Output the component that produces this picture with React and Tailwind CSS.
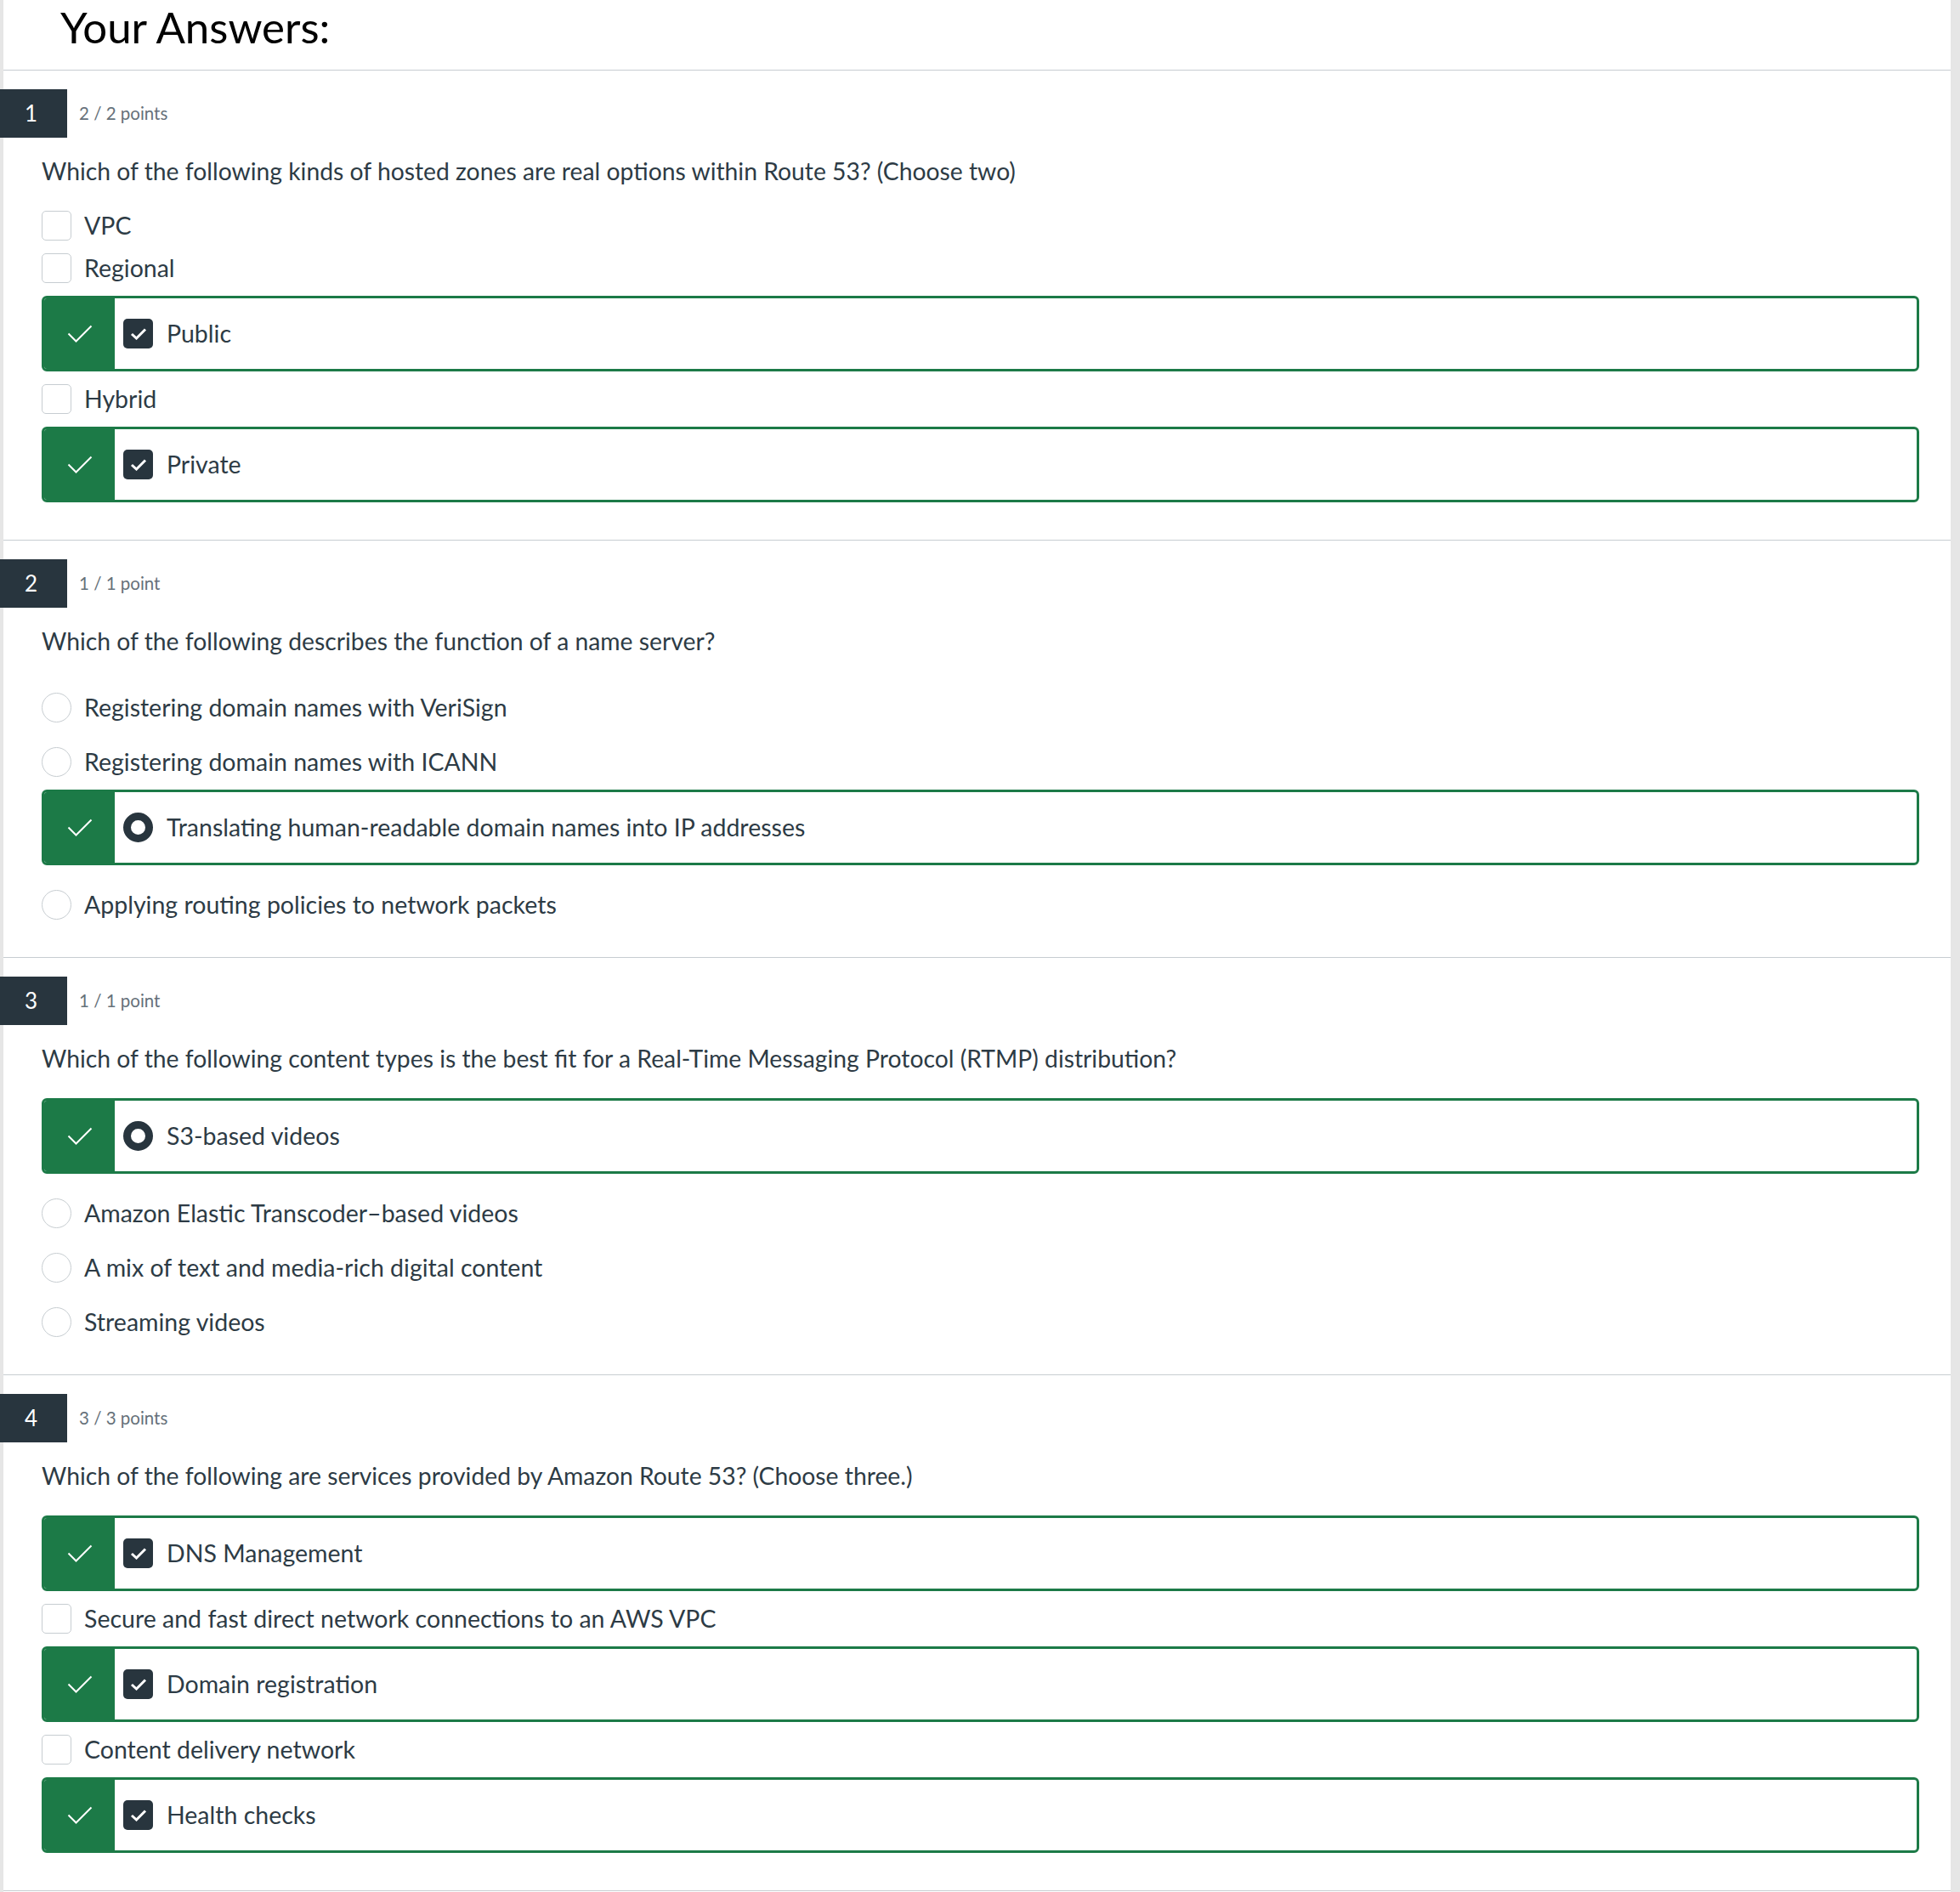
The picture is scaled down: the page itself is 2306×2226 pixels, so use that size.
const questions = [
  {
    n: 1,
    points: '2 / 2 points',
    text: 'Which of the following kinds of hosted zones are real options within Route 53? (Choose two)',
    type: 'check',
    answers: [
      { label: 'VPC' },
      { label: 'Regional' },
      { label: 'Public', correct: true },
      { label: 'Hybrid' },
      { label: 'Private', correct: true },
    ],
  },
  {
    n: 2,
    points: '1 / 1 point',
    text: 'Which of the following describes the function of a name server?',
    type: 'radio',
    answers: [
      { label: 'Registering domain names with VeriSign' },
      { label: 'Registering domain names with ICANN' },
      { label: 'Translating human-readable domain names into IP addresses', correct: true },
      { label: 'Applying routing policies to network packets' },
    ],
  },
  {
    n: 3,
    points: '1 / 1 point',
    text: 'Which of the following content types is the best fit for a Real-Time Messaging Protocol (RTMP) distribution?',
    type: 'radio',
    answers: [
      { label: 'S3-based videos', correct: true },
      { label: 'Amazon Elastic Transcoder–based videos' },
      { label: 'A mix of text and media-rich digital content' },
      { label: 'Streaming videos' },
    ],
  },
  {
    n: 4,
    points: '3 / 3 points',
    text: 'Which of the following are services provided by Amazon Route 53? (Choose three.)',
    type: 'check',
    answers: [
      { label: 'DNS Management', correct: true },
      { label: 'Secure and fast direct network connections to an AWS VPC' },
      { label: 'Domain registration', correct: true },
      { label: 'Content delivery network' },
      { label: 'Health checks', correct: true },
    ],
  },
]

function GreenCheck() {
  return (
    <svg width="30" height="21" viewBox="0 0 30 21" fill="none">
      <path d="M1.5 10.5 L10.5 19.5 L28.5 1.5" stroke="white" strokeWidth="2" />
    </svg>
  )
}

function BoxCheck() {
  return (
    <svg width="20" height="14" viewBox="0 0 20 14" fill="none">
      <path d="M2 7 L7.5 12 L18 1.5" stroke="white" strokeWidth="3" />
    </svg>
  )
}

function Answer({ type, label, correct }) {
  if (correct) {
    return (
      <div className="mt-[15px] flex h-[89px] overflow-hidden rounded-[6px] border-[3px] border-[#1c7a47]">
        <div className="flex w-[83px] items-center justify-center bg-[#1c7a47]">
          <GreenCheck />
        </div>
        <div className="flex flex-1 items-center pl-[10px]">
          {type === 'check' ? (
            <div className="flex h-[35px] w-[35px] items-center justify-center rounded-[5px] bg-[#28353e]">
              <BoxCheck />
            </div>
          ) : (
            <div className="h-[35px] w-[35px] rounded-full border-[9px] border-[#28353e]" />
          )}
          <span className="ml-[16px] text-[28.5px] text-[#2d3b45]">{label}</span>
        </div>
      </div>
    )
  }
  return (
    <div className={`flex h-[35px] items-center ${type === 'check' ? 'mt-[15px]' : 'mt-[29px]'}`}>
      <div
        className={`h-[35px] w-[35px] border border-[#c7cdd1] ${type === 'check' ? 'rounded-[5px]' : 'rounded-full'}`}
      />
      <span className="ml-[15px] text-[28.5px] text-[#2d3b45]">{label}</span>
    </div>
  )
}

function Question({ q }) {
  return (
    <section className="border-t border-[#c7cdd1] pt-[22px] pb-[44px]">
      <div className="flex items-center">
        <div className="-ml-[4px] flex h-[57px] w-[79px] items-center justify-center pr-[6px] bg-[#28353e] text-[26px] text-white">
          {q.n}
        </div>
        <span className="ml-[14px] text-[20.5px] text-[#66717a]">{q.points}</span>
      </div>
      <div className="mt-[21px] pl-[45px] text-[28.3px] leading-[36px] text-[#2d3b45]">{q.text}</div>
      <div className="flex flex-col pt-[14px] pl-[45px] pr-[37px]">
        {q.answers.map((a) => (
          <Answer key={a.label} type={q.type} {...a} />
        ))}
      </div>
    </section>
  )
}

export default function App() {
  return (
    <div className="min-h-screen bg-[#e6e6e6] font-['Lato',sans-serif]">
      <div className="ml-[4px] mr-[11px] bg-white">
        <div className="h-[82px] pt-[1px] pl-[67px] text-[51px] leading-[1.2] text-black">Your Answers:</div>
        {questions.map((q) => (
          <Question key={q.n} q={q} />
        ))}
        <div className="h-[8px] border-t border-[#c7cdd1]" />
      </div>
    </div>
  )
}
